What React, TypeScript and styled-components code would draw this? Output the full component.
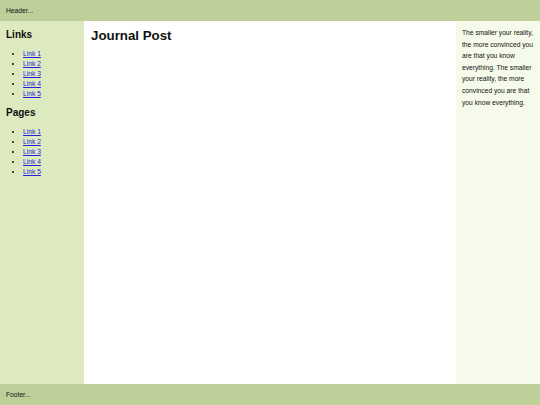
import React from "react";
import styled, { createGlobalStyle } from "styled-components";

const Global = createGlobalStyle`
  html, body { margin: 0; padding: 0; }
  body { font-family: "Liberation Sans", Arial, sans-serif; color: #111; }
`;

const Page = styled.div`
  display: flex;
  flex-direction: column;
  height: 405px;
  width: 540px;
`;

const Bar = styled.div`
  height: 21px;
  flex: none;
  background: #bfcf99;
  display: flex;
  align-items: center;
  padding: 0 6px;
  font-size: 6.7px;
`;

const Middle = styled.div`
  flex: 1;
  display: flex;
  min-height: 0;
`;

const Side = styled.aside<{ $bg: string }>`
  width: 84px;
  flex: none;
  box-sizing: border-box;
  background: ${(p) => p.$bg};
  padding: 6px;
`;

const Main = styled.main`
  flex: 1;
  background: #fff;
  padding: 6px 7px;
`;

const SideTitle = styled.h2`
  font-size: 10px;
  font-weight: bold;
  margin: 0 0 8px;
  line-height: 13px;
  padding-top: 1px;
`;

const List = styled.ul`
  margin: 0 0 6px;
  padding-left: 17px;
  font-size: 6.7px;
  line-height: 10px;
  & a { color: #2323dd; }
`;

const Title = styled.h1`
  font-size: 13.3px;
  font-weight: bold;
  margin: 0;
  line-height: 16px;
  padding-top: 1px;
`;

const Aside = styled.p`
  margin: 0;
  font-size: 6.7px;
  line-height: 11.6px;
`;

const items = ["Link 1", "Link 2", "Link 3", "Link 4", "Link 5"];

export default function App() {
  return (
    <Page>
      <Global />
      <Bar>Header...</Bar>
      <Middle>
        <Side $bg="#dde9be">
          <SideTitle>Links</SideTitle>
          <List>
            {items.map((t) => (
              <li key={t}><a href="#">{t}</a></li>
            ))}
          </List>
          <SideTitle>Pages</SideTitle>
          <List>
            {items.map((t) => (
              <li key={t}><a href="#">{t}</a></li>
            ))}
          </List>
        </Side>
        <Main>
          <Title>Journal Post</Title>
        </Main>
        <Side $bg="#f6faea">
          <Aside>
            The smaller your reality, the more convinced you are that you know everything. The smaller your reality, the more convinced you are that you know everything.
          </Aside>
        </Side>
      </Middle>
      <Bar>Footer...</Bar>
    </Page>
  );
}
